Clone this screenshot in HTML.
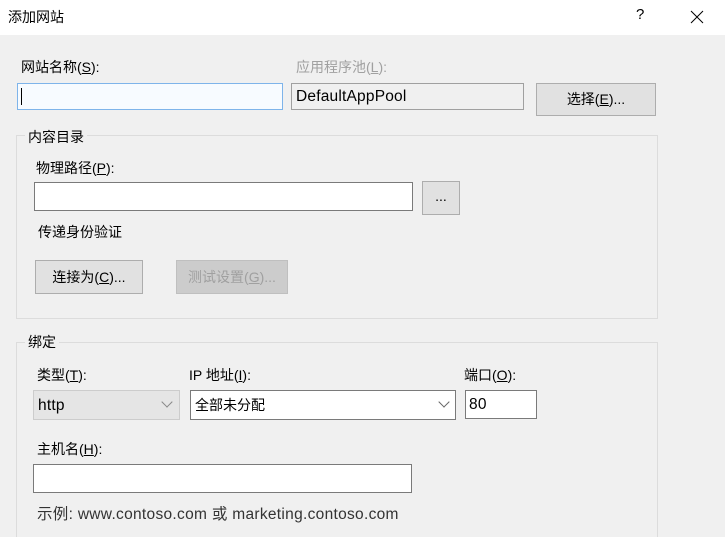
<!DOCTYPE html>
<html><head><meta charset="utf-8"><style>
html,body{margin:0;width:725px;height:537px;overflow:hidden}
body{background:#f0f0f0;position:relative;font-family:"Liberation Sans","Noto Sans CJK SC",sans-serif;font-size:14px;color:#000}
.a{position:absolute;white-space:nowrap;line-height:18px}
.box{position:absolute;box-sizing:border-box;border:1px solid #7a7a7a;background:#fff}
.btn{position:absolute;box-sizing:border-box;border:1px solid #adadad;background:#e1e1e1;text-align:center;line-height:30px}
.grp{position:absolute;box-sizing:border-box;border:1px solid #dcdcdc}
.lg{position:absolute;background:#f0f0f0;padding:0 3px;line-height:18px}
.l{font-size:15.5px;letter-spacing:0.2px}
u{text-decoration:underline}
.chev{position:absolute;width:7px;height:7px;border-right:1px solid #555;border-bottom:1px solid #555;transform:rotate(45deg)}
</style></head><body>
<div style="position:absolute;left:0;top:0;width:725px;height:35px;background:#fff"></div>
<div class="a" style="left:8px;top:8px">添加网站</div>
<div class="a" style="left:636px;top:6px;font-size:15px">?</div>
<svg style="position:absolute;left:690px;top:10px" width="14" height="14"><path d="M1 1L13 13M13 1L1 13" stroke="#000" stroke-width="1"/></svg>

<div class="a" style="left:21px;top:58px">网站名称(<u>S</u>):</div>
<div class="box" style="left:17px;top:83px;width:266px;height:27px;border-color:#7eb4ea;background:#f7fbff"></div>
<div style="position:absolute;left:21px;top:88px;width:1px;height:17px;background:#000"></div>
<div class="a" style="left:296px;top:58px;color:#a0a0a0">应用程序池(<u>L</u>):</div>
<div class="box" style="left:291px;top:83px;width:233px;height:27px;background:#f0f0f0;border-color:#a0a0a0"></div>
<div class="a l" style="left:296px;top:88px">DefaultAppPool</div>
<div class="btn" style="left:536px;top:83px;width:120px;height:33px">选择(<u>E</u>)...</div>

<div class="grp" style="left:16px;top:135px;width:642px;height:184px"></div>
<div class="lg" style="left:25px;top:128px">内容目录</div>
<div class="a" style="left:36px;top:159px">物理路径(<u>P</u>):</div>
<div class="box" style="left:34px;top:182px;width:379px;height:29px"></div>
<div class="btn" style="left:422px;top:181px;width:38px;height:34px;line-height:28px">...</div>
<div class="a" style="left:38px;top:223px">传递身份验证</div>
<div class="btn" style="left:35px;top:260px;width:108px;height:34px;line-height:32px">连接为(<u>C</u>)...</div>
<div class="btn" style="left:176px;top:260px;width:112px;height:34px;line-height:32px;background:#cccccc;border-color:#bfbfbf;color:#a0a0a0">测试设置(<u>G</u>)...</div>

<div class="grp" style="left:16px;top:342px;width:642px;height:220px"></div>
<div class="lg" style="left:25px;top:333px">绑定</div>
<div class="a" style="left:37px;top:366px">类型(<u>T</u>):</div>
<div class="box" style="left:33px;top:390px;width:147px;height:30px;background:#e5e5e5;border-color:#cccccc"></div>
<div class="a l" style="left:38px;top:397px">http</div>
<div class="chev" style="left:163px;top:398px;border-color:#888"></div>
<div class="a" style="left:189px;top:366px">IP 地址(<u>I</u>):</div>
<div class="box" style="left:190px;top:390px;width:266px;height:30px"></div>
<div class="a" style="left:195px;top:396px">全部未分配</div>
<div class="chev" style="left:440px;top:398px;border-color:#666"></div>
<div class="a" style="left:464px;top:366px">端口(<u>O</u>):</div>
<div class="box" style="left:465px;top:390px;width:72px;height:29px"></div>
<div class="a l" style="left:469px;top:396px">80</div>
<div class="a" style="left:37px;top:440px">主机名(<u>H</u>):</div>
<div class="box" style="left:33px;top:464px;width:379px;height:29px"></div>
<div class="a" style="left:37px;top:506px;color:#333;font-size:15.5px;letter-spacing:0.3px">示例: www.contoso.com 或 marketing.contoso.com</div>
</body></html>
